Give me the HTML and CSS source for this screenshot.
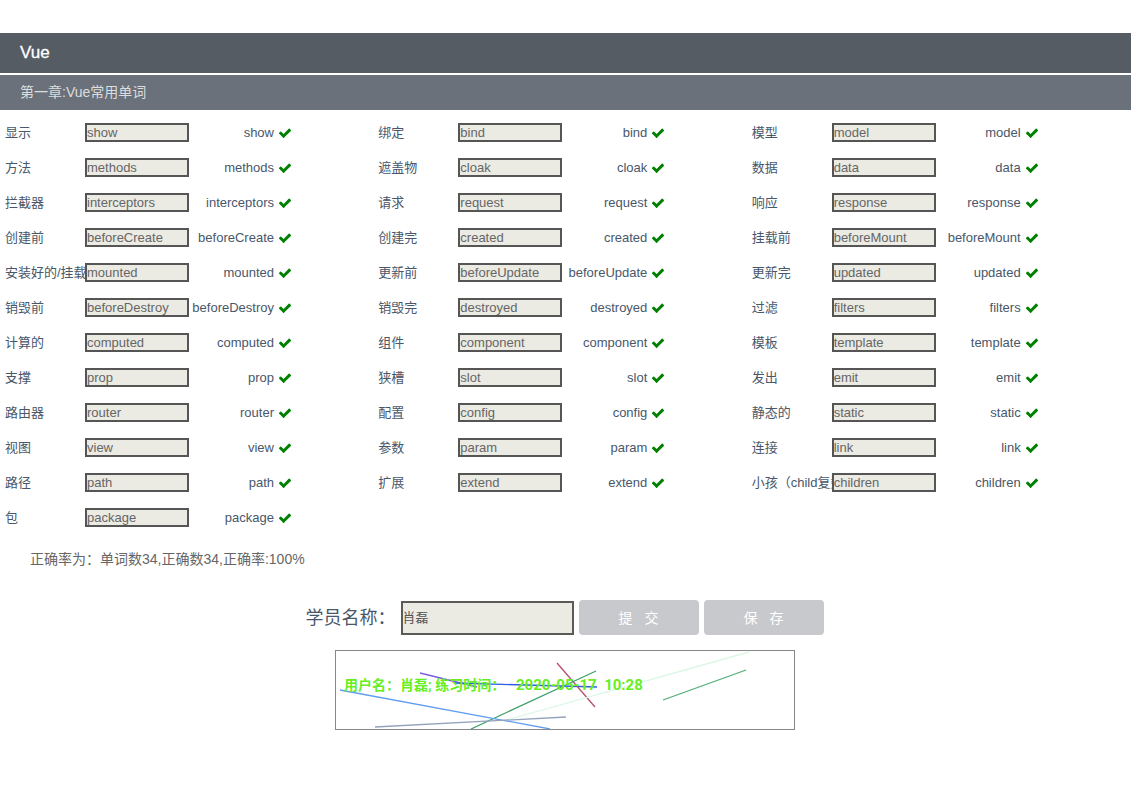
FILE: index.html
```html
<!DOCTYPE html>
<html lang="zh">
<head>
    <meta charset="UTF-8">
    <title>Vue</title>
    <link rel="stylesheet" href="styles.css">
</head>
<body>
    <div class="course-title">Vue</div>
    <div class="chapter-title">第一章:Vue常用单词</div>
    <div class="word-grid" id="wordGrid"></div>
    <p class="result">正确率为：单词数34,正确数34,正确率:100%</p>
    <div class="submit-row">
        <label class="name-label">学员名称：</label>
        <input class="name-input" type="text" value="肖磊">
        <button class="btn">提 交</button>
        <button class="btn">保 存</button>
    </div>
    <div class="canvas-row">
        <svg class="watermark" width="458" height="78" viewBox="336 651 458 78">
            <line x1="420" y1="673" x2="477" y2="687" stroke="#7a5ce0" stroke-width="1.3"/>
            <line x1="455" y1="683" x2="597" y2="687" stroke="#2f5fe0" stroke-width="1.3"/>
            <line x1="557" y1="663" x2="595" y2="707" stroke="#b5506e" stroke-width="1.3"/>
            <line x1="471" y1="729" x2="596" y2="671" stroke="#3fa06a" stroke-width="1.3"/>
            <line x1="503" y1="721" x2="749" y2="652" stroke="#dcf7e6" stroke-width="1.3"/>
            <line x1="663" y1="700" x2="746" y2="670" stroke="#4fae78" stroke-width="1.3"/>
            <line x1="340" y1="690" x2="550" y2="729" stroke="#5f9df0" stroke-width="1.3"/>
            <line x1="375" y1="727" x2="566" y2="717" stroke="#93a3bd" stroke-width="1.3"/>
            <text class="watermark-text" x="344" y="690">用户名：肖磊; 练习时间：<tspan class="watermark-date" x="516">2020-05-17  10:28</tspan></text>
        </svg>
    </div>
    <script>
        const words = [
            ['显示', 'show'], ['绑定', 'bind'], ['模型', 'model'],
            ['方法', 'methods'], ['遮盖物', 'cloak'], ['数据', 'data'],
            ['拦截器', 'interceptors'], ['请求', 'request'], ['响应', 'response'],
            ['创建前', 'beforeCreate'], ['创建完', 'created'], ['挂载前', 'beforeMount'],
            ['安装好的/挂载', 'mounted'], ['更新前', 'beforeUpdate'], ['更新完', 'updated'],
            ['销毁前', 'beforeDestroy'], ['销毁完', 'destroyed'], ['过滤', 'filters'],
            ['计算的', 'computed'], ['组件', 'component'], ['模板', 'template'],
            ['支撑', 'prop'], ['狭槽', 'slot'], ['发出', 'emit'],
            ['路由器', 'router'], ['配置', 'config'], ['静态的', 'static'],
            ['视图', 'view'], ['参数', 'param'], ['连接', 'link'],
            ['路径', 'path'], ['扩展', 'extend'], ['小孩（child复数）', 'children'],
            ['包', 'package']
        ];
        const grid = document.getElementById('wordGrid');
        const check = '<svg class="check" viewBox="0 0 1792 1792"><path d="M1671 566q0 40-28 68l-724 724-136 136q-28 28-68 28t-68-28l-136-136-362-362q-28-28-28-68t28-68l136-136q28-28 68-28t68 28l294 295 656-657q28-28 68-28t68 28l136 136q28 28 28 68z"/></svg>';
        words.forEach(w => {
            const item = document.createElement('div');
            item.className = 'word-item';
            item.innerHTML = `<span class="word-cn">${w[0]}</span>`
                + `<input class="word-input" type="text" value="${w[1]}">`
                + `<span class="word-answer">${w[1]}</span>${check}`;
            grid.appendChild(item);
        });
    </script>
</body>
</html>
```

FILE: styles.css
```css
body {
    margin: 0;
    padding-top: 33px;
    font-family: "Liberation Sans", "Noto Sans CJK SC", sans-serif;
    color: #48576a;
    background: #fff;
}
.course-title {
    height: 40px;
    line-height: 39px;
    padding-left: 20px;
    background: #555c63;
    color: #fff;
    font-size: 17px;
    -webkit-text-stroke: 0.3px #fff;
    margin-bottom: 2px;
}
.chapter-title {
    height: 35px;
    line-height: 35px;
    padding-left: 20px;
    background: #6a717b;
    color: #ddd;
    font-size: 14px;
}
.word-grid {
    display: grid;
    grid-template-columns: repeat(3, 373.33px);
    grid-auto-rows: 35px;
    padding: 5px 0 0 5px;
}
.word-item {
    display: flex;
    align-items: center;
    height: 35px;
    font-size: 13px;
}
.word-cn {
    width: 80px;
    flex: none;
    white-space: nowrap;
    margin-bottom: 2px;
}
.word-input {
    width: 104px;
    height: 19px;
    flex: none;
    box-sizing: border-box;
    padding: 0;
    border: 2px solid #555;
    background: #ebeae3;
    color: #666;
    font: 13px "Liberation Sans", sans-serif;
}
.word-answer {
    width: 85px;
    flex: none;
    text-align: right;
    white-space: nowrap;
}
.check {
    width: 14px;
    height: 14px;
    margin-left: 4px;
    fill: #008000;
}
.result {
    margin: 14px 0 0 30px;
    font-size: 14px;
    line-height: 20px;
    color: #666;
}
.submit-row {
    display: flex;
    align-items: center;
    justify-content: center;
    margin-top: 31px;
    padding-right: 2px;
    height: 35px;
}
.name-label {
    font-size: 18px;
    margin: 0 5px 3px 0;
}
.name-input {
    width: 173px;
    height: 34px;
    box-sizing: border-box;
    padding: 0 0 3px;
    border: 2px solid #5a5a57;
    background: #ebeae3;
    color: #555;
    font: 13px "Liberation Sans", "Noto Sans CJK SC", sans-serif;
}
.btn {
    width: 120px;
    height: 35px;
    margin-left: 5px;
    padding: 0 6px 2px;
    border: none;
    border-radius: 4px;
    background: #c8c9cd;
    color: #fff;
    font: 14px "Liberation Sans", "Noto Sans CJK SC", sans-serif;
    white-space: pre;
    word-spacing: 8px;
}
.canvas-row {
    display: flex;
    justify-content: center;
    margin-top: 15px;
    padding-right: 2px;
}
.watermark {
    display: block;
    width: 458px;
    height: 78px;
    border: 1px solid #888;
}
.watermark-text {
    font: bold 14px Roboto, "Noto Sans CJK SC", sans-serif;
    fill: #66ee22;
    white-space: pre;
}
.watermark-date {
    font-size: 15px;
}
```
